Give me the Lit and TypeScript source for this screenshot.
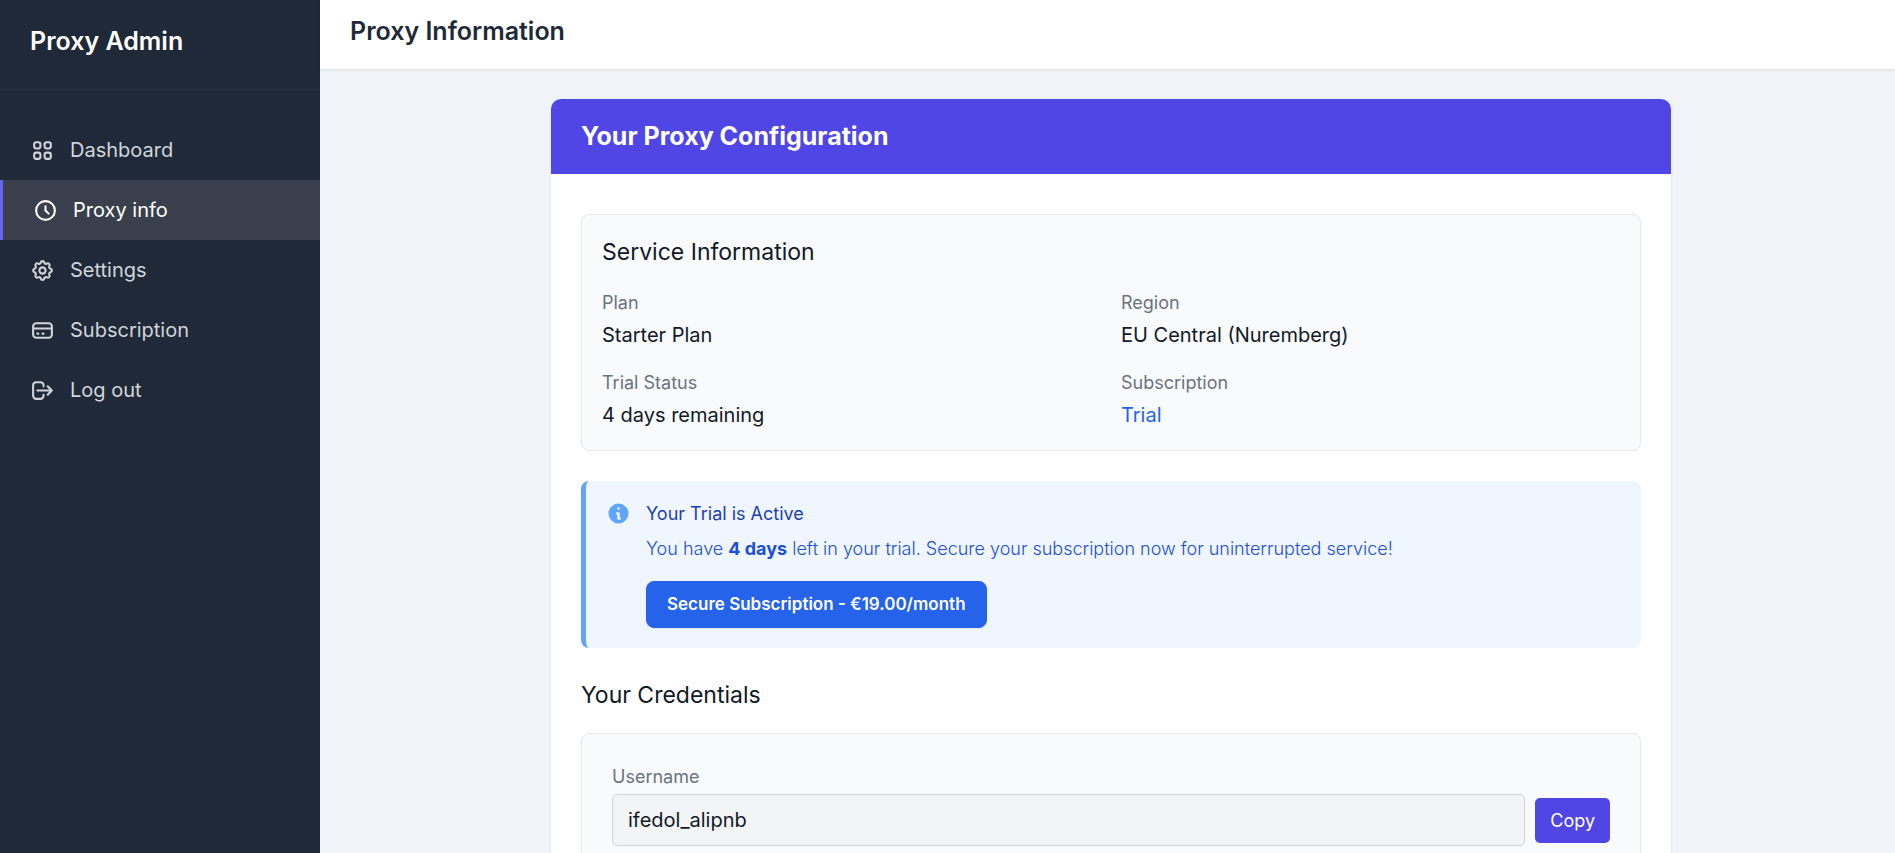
import { LitElement, html, css, svg, nothing, type TemplateResult } from "lit";
import { customElement, property } from "lit/decorators.js";
import { classMap } from "lit/directives/class-map.js";

interface NavEntry {
  label: string;
  icon: string;
  active?: boolean;
}

interface Fact {
  label: string;
  value: string;
  link?: boolean;
}

const icons: Record<string, TemplateResult> = {
  dashboard: svg`<path d="M4 6a2 2 0 0 1 2-2h2a2 2 0 0 1 2 2v2a2 2 0 0 1-2 2H6a2 2 0 0 1-2-2V6zM14 6a2 2 0 0 1 2-2h2a2 2 0 0 1 2 2v2a2 2 0 0 1-2 2h-2a2 2 0 0 1-2-2V6zM4 16a2 2 0 0 1 2-2h2a2 2 0 0 1 2 2v2a2 2 0 0 1-2 2H6a2 2 0 0 1-2-2v-2zM14 16a2 2 0 0 1 2-2h2a2 2 0 0 1 2 2v2a2 2 0 0 1-2 2h-2a2 2 0 0 1-2-2v-2z"/>`,
  clock: svg`<path d="M12 8v4l3 3m6-3a9 9 0 1 1-18 0 9 9 0 0 1 18 0z"/>`,
  settings: svg`<path d="M10.325 4.317c.426-1.756 2.924-1.756 3.35 0a1.724 1.724 0 0 0 2.573 1.066c1.543-.94 3.31.826 2.37 2.37a1.724 1.724 0 0 0 1.065 2.572c1.756.426 1.756 2.924 0 3.35a1.724 1.724 0 0 0-1.066 2.573c.94 1.543-.826 3.31-2.37 2.37a1.724 1.724 0 0 0-2.572 1.065c-.426 1.756-2.924 1.756-3.35 0a1.724 1.724 0 0 0-2.573-1.066c-1.543.94-3.31-.826-2.37-2.37a1.724 1.724 0 0 0-1.065-2.572c-1.756-.426-1.756-2.924 0-3.35a1.724 1.724 0 0 0 1.066-2.573c-.94-1.543.826-3.31 2.37-2.37.996.608 2.296.07 2.572-1.065z"/><path d="M15 12a3 3 0 1 1-6 0 3 3 0 0 1 6 0z"/>`,
  card: svg`<path d="M3 10h18M7 15h1m4 0h1m-7 4h12a3 3 0 0 0 3-3V8a3 3 0 0 0-3-3H6a3 3 0 0 0-3 3v8a3 3 0 0 0 3 3z"/>`,
  logout: svg`<path d="M17 16l4-4m0 0l-4-4m4 4H7m6 4v1a3 3 0 0 1-3 3H6a3 3 0 0 1-3-3V7a3 3 0 0 1 3-3h4a3 3 0 0 1 3 3v1"/>`,
};

const navEntries: NavEntry[] = [
  { label: "Dashboard", icon: "dashboard" },
  { label: "Proxy info", icon: "clock", active: true },
  { label: "Settings", icon: "settings" },
  { label: "Subscription", icon: "card" },
  { label: "Log out", icon: "logout" },
];

const facts: Fact[] = [
  { label: "Plan", value: "Starter Plan" },
  { label: "Region", value: "EU Central (Nuremberg)" },
  { label: "Trial Status", value: "4 days remaining" },
  { label: "Subscription", value: "Trial", link: true },
];

@customElement("app-sidebar")
export class AppSidebar extends LitElement {
  static styles = css`
    :host {
      display: flex;
      flex-direction: column;
      background: #1f2937;
      color: #fff;
    }
    .brand {
      padding: 24px 30px 30px;
      border-bottom: 1px solid #252f3d;
      font-size: 25px;
      line-height: 35px;
      font-weight: 600;
    }
    .nav {
      display: flex;
      flex-direction: column;
      padding: 30px 0;
    }
    .item {
      display: flex;
      align-items: center;
      gap: 15px;
      padding: 15px 30px;
      line-height: 30px;
      color: #d1d5db;
      text-decoration: none;
    }
    .item.active {
      color: #fff;
      background: #393f4c;
      border-left: 3px solid #6366f1;
    }
    .icon {
      width: 25px;
      height: 25px;
      fill: none;
      stroke: currentColor;
      stroke-width: 2;
      stroke-linecap: round;
      stroke-linejoin: round;
    }
  `;

  render() {
    return html`
      <div class="brand">Proxy Admin</div>
      <nav class="nav">
        ${navEntries.map(
          (entry) => html`
            <a
              class=${classMap({ item: true, active: !!entry.active })}
              href="#"
              aria-current=${entry.active ? "page" : nothing}
            >
              <svg class="icon" viewBox="0 0 24 24" aria-hidden="true">${icons[entry.icon]}</svg>
              <span>${entry.label}</span>
            </a>
          `,
        )}
      </nav>
    `;
  }
}

@customElement("copy-field")
export class CopyField extends LitElement {
  @property() label = "";
  @property() value = "";

  static styles = css`
    :host {
      display: block;
    }
    .label {
      display: block;
      margin-bottom: 5px;
      font-size: 18px;
      line-height: 25px;
      font-weight: 400;
      color: #6b7280;
    }
    .row {
      display: flex;
      align-items: center;
      gap: 10px;
    }
    .input {
      flex: 1;
      min-width: 0;
      box-sizing: border-box;
      height: 52px;
      padding: 10px 15px;
      border: 1px solid #d1d5db;
      border-radius: 5px;
      background: #f3f4f6;
      color: #111827;
      font: inherit;
    }
    .copy {
      padding: 10px 15px;
      border: 0;
      border-radius: 5px;
      background: #4f46e5;
      color: #fff;
      font-family: inherit;
      font-size: 18px;
      line-height: 25px;
      font-weight: 400;
      cursor: pointer;
    }
  `;

  private copy() {
    navigator.clipboard?.writeText(this.value);
  }

  render() {
    return html`
      <label class="label" for="field">${this.label}</label>
      <div class="row">
        <input class="input" id="field" type="text" readonly .value=${this.value} />
        <button class="copy" type="button" @click=${this.copy}>Copy</button>
      </div>
    `;
  }
}

@customElement("app-root")
export class AppRoot extends LitElement {
  static styles = css`
    :host {
      display: grid;
      grid-template-columns: 320px minmax(0, 1fr);
      height: 100vh;
      overflow: hidden;
      background: #f0f3f8;
      color: #111827;
      font-family: Inter, "Liberation Sans", sans-serif;
      font-size: 20px;
      line-height: 30px;
    }
    .page {
      display: flex;
      flex-direction: column;
      min-width: 0;
      min-height: 0;
    }
    .topbar {
      padding: 14px 30px 20px;
      background: #fff;
      box-shadow: 0 1px 3px rgba(0, 0, 0, 0.08);
    }
    .title {
      margin: 0;
      font-size: 25px;
      line-height: 35px;
      font-weight: 600;
      color: #1f2937;
    }
    .main {
      flex: 1;
      min-height: 0;
      overflow-y: auto;
      scrollbar-width: none;
      padding: 30px 30px 30px 37px;
    }
    .card {
      max-width: 1120px;
      margin: 0 auto;
      border-radius: 10px;
      background: #fff;
      box-shadow: 0 1px 3px rgba(0, 0, 0, 0.1);
    }
    .card-head {
      padding: 20px 30px;
      border-radius: 10px 10px 0 0;
      background: #4f46e5;
      color: #fff;
    }
    .card-title {
      margin: 0;
      font-size: 25px;
      line-height: 35px;
      font-weight: 700;
    }
    .card-body {
      display: flex;
      flex-direction: column;
      gap: 30px;
      padding: 40px 30px;
    }
    .panel {
      border: 1px solid #e5e7eb;
      border-radius: 8px;
      background: #f9fafb;
      padding: 20px;
    }
    .panel.roomy {
      padding: 30px;
    }
    .heading {
      margin: 0 0 20px;
      font-size: 23px;
      line-height: 35px;
      font-weight: 400;
    }
    .facts {
      display: grid;
      grid-template-columns: repeat(2, minmax(0, 1fr));
      gap: 20px;
      margin: 0;
    }
    .term {
      margin-bottom: 5px;
      font-size: 18px;
      line-height: 25px;
      color: #6b7280;
    }
    .value {
      margin: 0;
    }
    .link {
      color: #2563eb;
      text-decoration: none;
    }
    .notice {
      display: flex;
      gap: 15px;
      padding: 20px;
      border-left: 5px solid #60a5fa;
      border-radius: 8px;
      background: #eff6ff;
      font-size: 18px;
      line-height: 25px;
      color: #1d4ed8;
    }
    .notice-icon {
      flex: none;
      width: 25px;
      height: 25px;
      fill: #60a5fa;
    }
    .notice-title {
      margin: 0 0 10px;
      font-size: 18px;
      font-weight: 400;
      color: #1e40af;
    }
    .notice-text {
      margin: 0 0 20px;
      font-weight: 300;
    }
    .strong {
      font-weight: 700;
    }
    .cta {
      display: block;
      padding: 10px 20px;
      border: 1px solid #2563eb;
      border-radius: 8px;
      background: #2563eb;
      color: #fff;
      font-family: inherit;
      font-size: 17px;
      line-height: 25px;
      font-weight: 600;
      box-shadow: 0 1px 2px rgba(0, 0, 0, 0.05);
      cursor: pointer;
    }
  `;

  render() {
    return html`
      <app-sidebar></app-sidebar>
      <div class="page">
        <header class="topbar"><h1 class="title">Proxy Information</h1></header>
        <main class="main">
          <article class="card">
            <div class="card-head"><h2 class="card-title">Your Proxy Configuration</h2></div>
            <div class="card-body">
              <section class="panel">
                <h3 class="heading">Service Information</h3>
                <dl class="facts">
                  ${facts.map(
                    (fact) => html`
                      <div>
                        <dt class="term">${fact.label}</dt>
                        <dd class="value">
                          ${fact.link ? html`<a class="link" href="#">${fact.value}</a>` : fact.value}
                        </dd>
                      </div>
                    `,
                  )}
                </dl>
              </section>
              <section class="notice">
                <svg class="notice-icon" viewBox="0 0 20 20" aria-hidden="true">
                  <path
                    fill-rule="evenodd"
                    d="M18 10a8 8 0 1 1-16 0 8 8 0 0 1 16 0zm-7-4a1 1 0 1 1-2 0 1 1 0 0 1 2 0zM9 9a1 1 0 0 0 0 2v3a1 1 0 0 0 1 1h1a1 1 0 1 0 0-2v-3a1 1 0 0 0-1-1H9z"
                    clip-rule="evenodd"
                  />
                </svg>
                <div>
                  <h3 class="notice-title">Your Trial is Active</h3>
                  <p class="notice-text">
                    You have <strong class="strong">4 days</strong> left in your trial. Secure your
                    subscription now for uninterrupted service!
                  </p>
                  <button class="cta" type="button">Secure Subscription - €19.00/month</button>
                </div>
              </section>
              <section>
                <h3 class="heading">Your Credentials</h3>
                <div class="panel roomy">
                  <copy-field label="Username" value="ifedol_alipnb"></copy-field>
                </div>
              </section>
            </div>
          </article>
        </main>
      </div>
    `;
  }
}
